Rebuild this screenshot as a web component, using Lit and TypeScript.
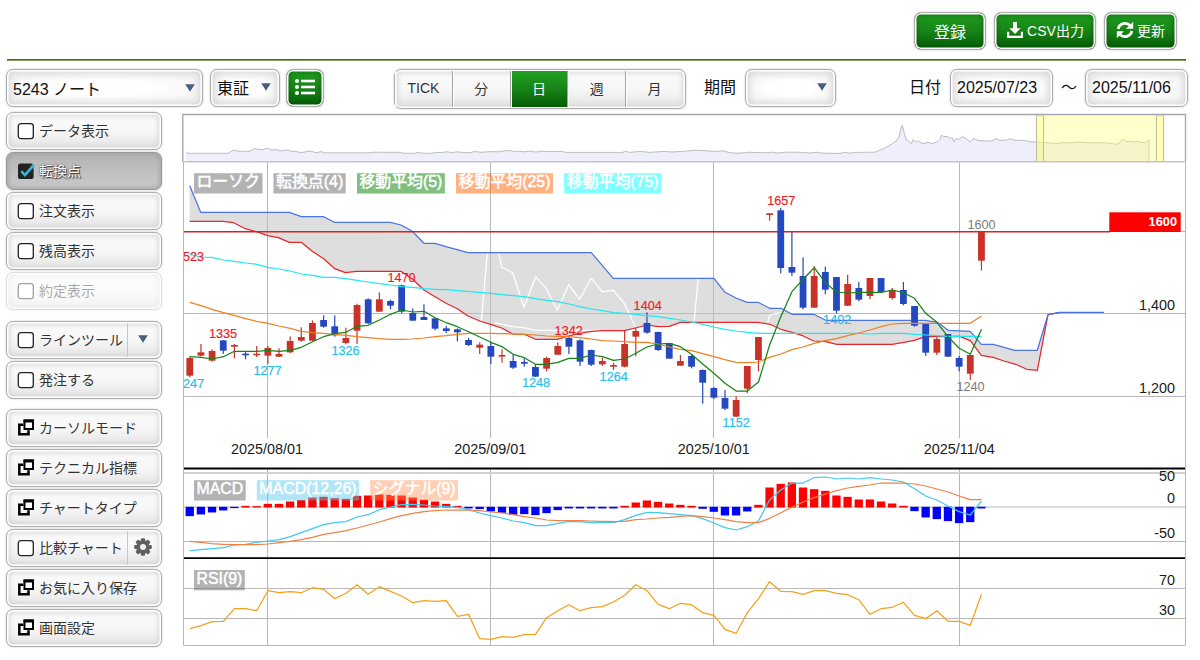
import { LitElement, html, svg, css, nothing } from "lit";
import { customElement, property } from "lit/decorators.js";

const JP = css`"Liberation Sans", "Noto Sans CJK JP", sans-serif`;

/* ---------- chart data ---------- */
const X0 = 189.8;
const STEP = 11.15;
const px = (i: number) => X0 + STEP * i;

// [up(1)/down(0), high, bodyTop, bodyBottom, low] in thirds of a pixel below y=160
const CANDLES: number[][] = [
  [1, 590, 594, 647, 652], [1, 552, 577, 587, 589], [1, 568, 573, 602, 605], [0, 541, 541, 572, 582],
  [1, 552, 555, 560, 595], [0, 574, 581, 586, 598], [1, 558, 581, 586, 591], [1, 558, 564, 587, 612],
  [1, 565, 582, 590, 591], [1, 529, 543, 577, 579], [1, 502, 531, 542, 545], [1, 481, 489, 542, 543],
  [0, 466, 480, 500, 503], [0, 466, 499, 526, 530], [1, 503, 534, 549, 553], [1, 431, 435, 512, 552],
  [0, 415, 418, 490, 492], [1, 397, 418, 455, 455], [0, 419, 423, 437, 448], [0, 374, 376, 455, 460],
  [0, 445, 459, 482, 482], [0, 433, 471, 480, 480], [0, 473, 475, 506, 511], [0, 498, 505, 513, 519],
  [0, 505, 508, 517, 544], [0, 534, 540, 555, 558], [1, 547, 554, 563, 582], [0, 545, 558, 590, 612],
  [1, 568, 585, 589, 608], [0, 582, 603, 623, 627], [0, 595, 606, 611, 620], [0, 613, 621, 650, 651],
  [1, 590, 594, 626, 634], [1, 547, 558, 584, 585], [0, 531, 534, 560, 582], [0, 538, 541, 605, 618],
  [0, 569, 570, 614, 618], [1, 594, 603, 613, 618], [1, 608, 615, 620, 630], [1, 510, 552, 620, 622],
  [1, 503, 513, 530, 589], [0, 457, 489, 518, 521], [0, 515, 516, 570, 573], [0, 549, 549, 596, 597],
  [1, 585, 603, 617, 617], [0, 585, 588, 620, 625], [0, 628, 630, 668, 731], [0, 681, 684, 713, 717],
  [0, 690, 714, 746, 750], [1, 709, 720, 770, 770], [1, 618, 618, 686, 699], [1, 531, 531, 600, 634],
  [1, 160, 160, 165, 182], [0, 144, 151, 324, 340], [0, 215, 321, 338, 348], [0, 292, 348, 443, 448],
  [1, 318, 348, 443, 444], [0, 320, 336, 389, 403], [0, 351, 351, 452, 460], [1, 344, 372, 437, 438],
  [0, 366, 384, 419, 424], [1, 354, 354, 408, 418], [0, 354, 354, 396, 399], [1, 384, 390, 414, 419],
  [0, 366, 390, 432, 436], [0, 438, 438, 497, 500], [0, 490, 492, 578, 588], [1, 525, 537, 578, 585],
  [0, 522, 522, 590, 591], [0, 588, 594, 620, 634], [1, 585, 585, 641, 660], [1, 215, 216, 302, 332],
];

const MA5 = [590, 592, 597, 590, 574, 574, 574, 571, 574, 571, 562, 545, 530, 521, 517, 499, 496, 480, 463, 450, 456, 454, 473, 488,
  500, 515, 531, 547, 560, 583, 593, 613, 613, 607, 595, 595, 585, 590, 601, 597, 580, 561, 552, 550, 560, 583, 612, 640,
  670, 693, 693, 666, 555, 470, 395, 358, 323, 368, 396, 399, 397, 397, 397, 390, 398, 415, 460, 487, 530, 565, 583, 508];
const MA25 = [427, 437, 448, 458, 466, 476, 484, 490, 498, 505, 514, 518, 520, 523, 526, 530, 533, 536, 538, 538, 537, 534, 530, 527,
  523, 520, 520, 520, 521, 522, 523, 525, 528, 529, 530, 533, 537, 542, 543, 545, 547, 547, 552, 561, 568, 572, 581, 590,
  599, 607, 608, 606, 592, 582, 569, 561, 550, 542, 536, 527, 519, 510, 500, 492, 490, 490, 490, 490, 490, 490, 490, 468];
const MA75 = [283, 291, 292, 300, 304, 309, 313, 322, 327, 333, 342, 346, 352, 352, 356, 361, 366, 371, 375, 380, 382, 386, 388, 389,
  392, 395, 397, 400, 404, 407, 410, 416, 421, 425, 432, 440, 447, 452, 458, 460, 463, 467, 470, 475, 480, 486, 493, 501,
  508, 513, 517, 520, 520, 520, 520, 520, 520, 520, 520, 520, 520, 522, 520, 520, 520, 523, 525, 527, 529, 529, 529, 529];

const HIST = [-28, -23, -17, -11, -4, 5, 4, 11, 11, 18, 22, 30, 32, 28, 26, 35, 36, 39, 38, 36, 30, 23, 18, 11, 5, -5, -7, -14, -18, -24,
  -22, -25, -19, -10, -5, -5, -5, -5, -5, 5, 15, 21, 17, 12, 8, 5, -6, -15, -26, -26, -14, 8, 60, 71, 75, 60, 55, 50, 36, 32,
  24, 24, 18, 12, 5, -13, -32, -37, -43, -49, -46, -5];
const MACD = [362, 359, 356, 353, 345, 343, 337, 333, 329, 320, 308, 296, 284, 278, 275, 261, 254, 239, 231, 224, 223, 225, 228, 230,
  232, 239, 249, 257, 264, 273, 278, 287, 287, 280, 274, 275, 278, 278, 278, 269, 256, 247, 248, 251, 254, 257, 266, 279,
  293, 300, 290, 272, 210, 180, 159, 159, 143, 141, 147, 144, 147, 143, 147, 150, 156, 176, 198, 210, 228, 245, 255, 213];
const SIGNAL = [334, 337, 341, 343, 344, 344, 344, 342, 338, 334, 329, 322, 313, 308, 302, 294, 285, 276, 266, 257, 250, 245, 242, 240,
  240, 240, 242, 246, 249, 254, 260, 264, 270, 272, 272, 272, 273, 274, 275, 274, 269, 267, 264, 262, 259, 257, 260, 264,
  269, 275, 278, 278, 265, 248, 232, 216, 203, 192, 182, 174, 169, 165, 159, 159, 159, 162, 168, 177, 186, 198, 209, 209];
const RSI = [596, 587, 575, 574, 536, 536, 542, 482, 488, 485, 488, 473, 478, 506, 490, 464, 493, 470, 484, 498, 518, 512, 514, 512,
  559, 553, 626, 628, 620, 622, 614, 613, 563, 542, 524, 542, 533, 530, 516, 496, 464, 482, 523, 536, 520, 524, 548, 556,
  598, 610, 548, 506, 455, 484, 485, 493, 482, 482, 490, 494, 509, 553, 536, 532, 517, 556, 566, 542, 574, 574, 586, 493];

// [x, y in thirds below 160]
const CLOUD_TOP: number[][] = [[189.7, 77], [200.7, 157], [289.3, 157], [301.3, 170], [323.7, 170], [334.3, 187], [390, 187], [401, 195],
  [412.3, 214], [424, 250], [435, 250], [446, 260], [468, 278], [591.3, 278], [613.3, 355], [714, 355], [725, 397], [736, 414],
  [747, 427], [758, 427], [769.7, 445], [781, 445], [792, 463], [813.7, 463], [825.7, 481], [925.3, 481], [937.3, 487],
  [948.3, 511], [970.3, 514], [981.3, 553], [993.3, 553], [1014.7, 571], [1037.3, 571], [1048, 464], [1060, 457], [1104, 457]];
const CLOUD_BOTTOM: number[][] = [[189.7, 184], [222.7, 184], [233.7, 188], [245.3, 206], [256.3, 215], [267.7, 227], [278.3, 233],
  [289.3, 247], [301.3, 247], [312.3, 274], [323.7, 296], [334.3, 325], [345.3, 338], [356.3, 334], [401, 334], [412.3, 357],
  [424, 390], [435, 410], [446, 430], [457.3, 446], [468, 468], [479.7, 483], [490.7, 493], [501.7, 504], [512.7, 522],
  [524, 523], [535.7, 538], [557.3, 538], [568.7, 528], [579.7, 520], [591.3, 514], [602.3, 512], [624.3, 512], [635.3, 504],
  [647.3, 495], [658.3, 500], [669.3, 499], [680.3, 487], [758, 487], [769.7, 493], [781, 508], [792, 517], [802.7, 527],
  [813.7, 543], [825.7, 545], [836.7, 553], [892.3, 553], [903.7, 547], [914.3, 541], [925.3, 530], [959.7, 529],
  [970.3, 542], [981.3, 586], [993.3, 592], [1004, 603], [1015.7, 613], [1026.7, 628], [1037.3, 631], [1048, 464], [1060, 457]];
const LAGGING: number[][][] = [
  [[481.3, 483], [487.3, 278]],
  [[498.7, 278], [501.7, 322], [512.7, 338], [524, 442], [535.7, 350], [546.3, 386], [557.3, 451], [568.7, 374], [579.7, 418],
    [591.3, 355], [602.3, 395], [613.3, 391], [624.3, 430], [635.3, 500]],
  [[495, 488], [512.7, 500], [524, 503], [535.7, 511], [600, 511]],
  [[694, 487], [698.3, 355]],
  [[767.7, 487], [769.7, 465], [781, 457]],
];

const OVERVIEW = "186,152.7 188,153.3 228,153.3 231,151.5 234,150 238,151.3 244,151.3 249,151.3 252,150 255,148.2 258,149.5 263,149.6 267,148.2 272,150 277,149.6 280,151 283,150.3 288,150 291,151.3 296,151.3 299,152.3 304,152.3 307,151.3 312,151.3 315,152.7 322,151.7 324,152.8 370,152.8 374,152.2 380,152.3 400,152.3 404,153.3 414,153.3 418,152.5 424,153.3 432,153.3 436,152.4 442,152.6 446,151.8 452,152.5 458,151.8 463,152.6 470,152.6 474,151.6 482,152.3 490,151.6 499,151.8 505,150.8 510,150.4 514,151.8 519,151.2 524,151.8 530,151.2 536,152 542,151.2 550,151.7 562,151.4 566,152.4 622,152.4 626,151.4 630,152.4 640,151.4 650,152.4 664,151.4 672,152 682,151.4 696,150.2 706,150.8 712,151.3 724,151 730,152.8 740,153.2 748,152.2 764,152.8 772,152.2 778,153 786,152.2 800,152.3 811,153 817,152.2 822,153.2 840,153.4 845,152.2 850,153.3 855,152.4 875,152.2 879,150.4 884,148.5 888,146.2 892,144 894,142 896,141.2 899,137 900.5,130 902.3,125 904,132 906,139 909,141.5 911.5,143.5 913,139.6 916,142 918,140.8 921,143 924,143.5 928,142.3 932,143.6 938,141.5 940,139.5 941.5,135 943.5,136.6 948,136.4 950,138.6 952,137.4 954,142 956,138.5 959,139.5 962,136.8 966,138.4 970,142 974,138.4 978,140.6 992,141 996,138.4 1000,140.4 1006,140.2 1010,138.8 1016,140.4 1024,140.4 1030,141.8 1036,141.8 1043,142.5 1056,143.4 1064,142.6 1070,143 1078,142 1090,142.8 1100,142.6 1110,143.2 1116,144.4 1120,142.4 1123,139 1126,141.5 1130,141.2 1134,141.8 1138,141.6 1142,142.6 1146,142.4 1149,139.5";

const pts = (a: number[][]) => a.map(([x, y]) => `${x},${(160 + y / 3).toFixed(1)}`).join(" ");
const series = (a: number[], base: number) => a.map((y, i) => `${px(i).toFixed(1)},${(base + y / 3).toFixed(1)}`).join(" ");

/* ---------- icons ---------- */
const popupIcon = html`<svg width="18" height="18" viewBox="0 0.500 18 18"><path d="M7.500 2h8.500v8.500H7.500z" fill="#fff" stroke="#000" stroke-width="2"/><path d="M6.500 1H17v3H6.500z"/><path d="M6.500 6.300H2.300v9.400h9.200v-4" fill="none" stroke="#000" stroke-width="2.500"/></svg>`;
const boxIcon = html`<svg width="18" height="18" viewBox="0 0 18 18"><rect x="1.300" y="1.600" width="15" height="15" rx="2.600" fill="#fff" stroke="#222" stroke-width="1.300"/></svg>`;
const checkedIcon = html`<svg width="18" height="18" viewBox="0 0 18 18"><rect x="1" y="1.400" width="15.600" height="15.600" rx="2.600" fill="#222"/><path d="M4.300 9.200l3.600 3.900L16.800 3" fill="none" stroke="#30b8d4" stroke-width="2.700"/></svg>`;
const gearIcon = html`<svg width="18" height="18" viewBox="-9 -9 18 18"><g fill="#606060">${[0, 45, 90, 135].map(
  (a) => svg`<rect x="-2.100" y="-8.800" width="4.200" height="17.600" rx="1" transform="rotate(${a})"/>`,
)}<circle r="6.800"/></g><circle r="3" fill="#f0f0f0"/></svg>`;
const downloadIcon = html`<svg width="18" height="18" viewBox="0 0 18 18"><path d="M7 1h4v6.300h3.600L9 13 3.400 7.300H7z" fill="#fff"/><path d="M2.100 10.800v5.100h13.800v-5.100" fill="none" stroke="#fff" stroke-width="2.100"/></svg>`;
const refreshIcon = html`<svg width="18" height="18" viewBox="0 0 18 18" fill="none" stroke="#fff" stroke-width="2.800"><path d="M2.200 8A7 6.800 0 0 1 14.200 4.600"/><path d="M15.800 10A7 6.800 0 0 1 3.800 13.400"/><path d="M17.200 .8v7H10z" fill="#fff" stroke="none"/><path d="M.8 17.200v-7H8z" fill="#fff" stroke="none"/></svg>`;
const listIcon = html`<svg width="22" height="18" viewBox="0 0 22 18" fill="#fff"><circle cx="3" cy="3" r="2"/><circle cx="3" cy="9" r="2"/><circle cx="3" cy="15" r="2"/><rect x="7" y="1.700" width="14" height="2.600"/><rect x="7" y="7.700" width="14" height="2.600"/><rect x="7" y="13.700" width="14" height="2.600"/></svg>`;
const arrowIcon = html`<svg width="10" height="8" viewBox="0 0 10 8"><path d="M.2 .3h9.600L5 7.800z" fill="#4a5c80"/></svg>`;

/* ---------- chart ---------- */
@customElement("stock-chart")
export class StockChart extends LitElement {
  static styles = css`
    :host { display: block; }
    svg { display: block; }
    text { font-family: ${JP}; }
    .grid { stroke: #b8b8b8; stroke-width: 1; fill: none; }
    .light { stroke: #d2d2d2; stroke-width: 2; }
    .frame { stroke: #a9a9ae; stroke-width: 1.4; fill: none; }
    .split { stroke: #000; stroke-width: 1.8; }
    .line { fill: none; stroke-width: 1.25; stroke-linejoin: round; }
    .legend { fill: #fff; font-size: 16px; stroke: #fff; stroke-width: .5; }
    .peak { fill: #ef1c28; }
    .trough { fill: #1fbfee; }
    .edge { fill: #7c7c7c; }
    .peak, .trough, .edge { font-size: 12.7px; text-anchor: middle; stroke-width: .2; }
    .peak { stroke: #ef1c28; }
    .trough { stroke: #1fbfee; }
    .axis { fill: #1a1a1a; font-size: 14.4px; text-anchor: end; }
    .date { fill: #1a1a1a; font-size: 14.4px; text-anchor: middle; }
    .price { fill: #fff; font-size: 12.8px; font-weight: bold; text-anchor: end; }
  `;

  private legend(x: number, y: number, w: number, fill: string, label: string) {
    return svg`<rect x=${x} y=${y} width=${w} height="20.300" fill=${fill}/>
      <text class="legend" x=${x + 2.5} y=${y + 14} textLength=${w - 5} lengthAdjust="spacingAndGlyphs">${label}</text>`;
  }

  render() {
    const verticals = [267.5, 490.5, 713.5, 959.5];
    return html`<svg width="1005" height="535" viewBox="182 113 1005 535">
      <polygon points="186,161.500 ${OVERVIEW} 1149,161.500" fill="#efeffb"/>
      <polyline points="${OVERVIEW} 1149,161" fill="none" stroke="#bdbdc2" stroke-width="1"/>
      <rect x="1036.500" y="115" width="127" height="46.500" fill="rgba(255,255,120,.38)"/>
      <rect x="1036.500" y="115" width="7" height="46.500" fill="rgba(255,255,120,.25)" stroke="#bdbda4" stroke-width="1"/>
      <rect x="1156.500" y="115" width="7" height="46.500" fill="rgba(255,255,120,.25)" stroke="#bdbda4" stroke-width="1"/>

      ${verticals.map((x) => svg`<path class="grid" d="M${x} 162V438M${x} 469V645"/>`)}
      <path class="grid" d="M183 231.500H1185M183 313.500H1185M183 396.500H1185M183 507H1185M183 541.500H1185M183 588.500H1185M183 618.500H1185"/>
      <path class="light" d="M183 473H1185"/>
      <polygon points="${pts(CLOUD_TOP)} ${pts([...CLOUD_BOTTOM].reverse())}" fill="rgba(190,190,190,.5)"/>
      ${LAGGING.map((l) => svg`<polyline class="line" points=${pts(l)} stroke="#fff"/>`)}
      <polyline class="line" points=${pts(CLOUD_BOTTOM)} stroke="#e8262b"/>
      <polyline class="line" points=${pts(CLOUD_TOP)} stroke="#4a74e0"/>
      <path d="M183 231.700H1110" stroke="#dc2020" stroke-width="1.400"/>
      ${CANDLES.map(([up, h, t, b, l], i) => {
        const x = px(i);
        const color = up ? "#c83228" : "#2448c0";
        return svg`<rect x=${x - 0.6} y=${160 + h / 3} width="1.200" height=${(l - h) / 3} fill=${color}/>
          <rect x=${x - 3.4} y=${160 + t / 3} width="6.800" height=${Math.max(1.6, (b - t) / 3)} fill=${color}/>`;
      })}
      <polyline class="line" points=${series(MA75, 160)} stroke="#22e6f0"/>
      <polyline class="line" points=${series(MA25, 160)} stroke="#f08024"/>
      <polyline class="line" points=${series(MA5, 160)} stroke="#168416"/>

      <text class="peak" x="193.500" y="261">523</text>
      <text class="peak" x="223" y="338">1335</text>
      <text class="peak" x="401.500" y="282">1470</text>
      <text class="peak" x="568.700" y="335">1342</text>
      <text class="peak" x="647.700" y="310">1404</text>
      <text class="peak" x="781.300" y="205">1657</text>
      <text class="trough" x="193.500" y="387.500">247</text>
      <text class="trough" x="267.500" y="374.700">1277</text>
      <text class="trough" x="345.500" y="355">1326</text>
      <text class="trough" x="536" y="386.500">1248</text>
      <text class="trough" x="613.700" y="381">1264</text>
      <text class="trough" x="736.200" y="426.700">1152</text>
      <text class="trough" x="837.200" y="324">1402</text>
      <text class="edge" x="981.500" y="229">1600</text>
      <text class="edge" x="970.500" y="391">1240</text>

      <rect x="1109.300" y="212.300" width="71.400" height="19.700" fill="#f00"/>
      <text class="price" x="1177" y="226">1600</text>
      <text class="axis" x="1175" y="310">1,400</text>
      <text class="axis" x="1175" y="392.500">1,200</text>
      ${[["2025/08/01", 267], ["2025/09/01", 490.3], ["2025/10/01", 713.7], ["2025/11/04", 959.3]].map(
        ([d, x]) => svg`<text class="date" x=${x} y="454.400">${d}</text>`,
      )}

      ${HIST.map((v, i) =>
        v > 0
          ? svg`<rect x=${px(i) - 4.2} y=${507.5 - v / 3} width="8.300" height=${v / 3} fill="#f00"/>`
          : svg`<rect x=${px(i) - 4.2} y="506.800" width="8.300" height=${-v / 3} fill="#00f"/>`,
      )}
      <polyline class="line" points=${series(MACD, 430)} stroke="#42c8ee"/>
      <polyline class="line" points=${series(SIGNAL, 430)} stroke="#f08248"/>
      <polyline class="line" points=${series(RSI, 430)} stroke="#f5a01a"/>
      <path class="split" d="M183 468.500H1185.500M183 558.200H1185.500"/>
      <text class="axis" x="1175" y="481">50</text>
      <text class="axis" x="1175" y="503">0</text>
      <text class="axis" x="1175" y="538">-50</text>
      <text class="axis" x="1175" y="585">70</text>
      <text class="axis" x="1175" y="615">30</text>

      ${this.legend(194, 173.2, 68.5, "rgba(110,110,110,.52)", "ローソク")}
      ${this.legend(273.5, 173.2, 72.2, "rgba(110,110,110,.52)", "転換点(4)")}
      ${this.legend(357, 173.2, 87.8, "rgba(0,128,0,.5)", "移動平均(5)")}
      ${this.legend(456, 173.2, 97, "rgba(255,100,0,.5)", "移動平均(25)")}
      ${this.legend(564.2, 173.2, 97, "rgba(0,255,255,.5)", "移動平均(75)")}
      ${this.legend(194, 480.2, 51.7, "rgba(110,110,110,.52)", "MACD")}
      ${this.legend(256.8, 480.2, 102.3, "rgba(80,200,240,.45)", "MACD(12,26)")}
      ${this.legend(370.3, 480.2, 87.7, "rgba(255,140,80,.42)", "シグナル(9)")}
      ${this.legend(194, 570, 50.8, "rgba(110,110,110,.52)", "RSI(9)")}

      <path class="frame" d="M182.800 161.800V114.500H1185.500V161.800"/>
      <path d="M182.500 161.800H1186" stroke="#c4c4cc" stroke-width="1.500"/>
      <path class="grid" d="M183.500 162V645.500H1185.500V162"/>
    </svg>`;
  }
}

/* ---------- button ---------- */
@customElement("ui-box")
export class UiBox extends LitElement {
  @property() variant = "plain";
  static styles = css`
    :host { display: block; height: 38px; box-sizing: border-box; }
    .box {
      box-sizing: border-box; height: 100%; width: 100%; display: flex; align-items: center;
      border: 1px solid #adadad; border-radius: 7px; font-family: ${JP}; color: #333;
      box-shadow: inset 0 0 0 1.5px #fff, inset 0 0 6px 2px #d2d2d2, 0 0 2px rgba(0, 0, 0, .25);
      background: linear-gradient(#fbfbfb, #f7f7f7 50%, #e4e4e4);
    }
    .active {
      background: linear-gradient(#b4b4b4, #cacaca); color: #fff; border-color: #999;
      box-shadow: inset 0 0 5px 1px #a2a2a2, 0 0 2px rgba(0, 0, 0, .25);
      text-shadow: 1px 1px 1px #333, 0 0 1px #555, 0 0 2px #666;
    }
    .green {
      color: #fff; background: linear-gradient(#1e9c1e, #188418 50%, #055c05);
      box-shadow: inset 0 0 0 1.5px #fff, inset 0 0 4px 2px rgba(0, 60, 0, .45), 0 0 2px rgba(0, 0, 0, .25);
    }
    .field { color: #111; background: radial-gradient(ellipse at center, #fff 30%, #f1f1f1 100%);
      box-shadow: inset 0 0 0 1.5px #fff, inset 0 0 8px 3px #d4d4d4, 0 0 2px rgba(0, 0, 0, .25); }
    .disabled { opacity: .42; }
  `;
  render() {
    return html`<div class="box ${this.variant}"><slot></slot></div>`;
  }
}

interface Item { label: string; icon: unknown; variant?: string; extra?: unknown; }

@customElement("app-root")
export class AppRoot extends LitElement {
  static styles = css`
    :host { display: block; width: 1200px; height: 660px; overflow: hidden; background: #fff; font-family: ${JP}; color: #111; font-size: 16px; }
    .header { display: flex; justify-content: flex-end; gap: 8px; height: 47px; margin: 0 14px 0 7px; padding: 12px 9px 0 0; }
    .rule { height: 2px; margin: 0 14px 0 7px; background: linear-gradient(#4b692c 50%, #83a05f 50%); }
    .save { width: 72px; } .csv { width: 102px; } .reload { width: 73px; }
    .center { display: flex; align-items: center; justify-content: center; width: 100%; gap: 3px; font-size: 14px; white-space: nowrap; padding-bottom: 2px; }
    .large { font-size: 16px; padding: 0; }
    .toolbar { display: flex; align-items: flex-start; height: 51px; padding: 8px 12px 0 6px; box-sizing: border-box; }
    .symbol { width: 197px; } .market { width: 70px; margin-left: 7px; } .list { width: 38px; margin-left: 6px; }
    .select { display: flex; flex: 1; align-items: center; justify-content: space-between; padding: 0 7px 1px 6px; white-space: nowrap; }
    .tight { padding-bottom: 3px; padding-right: 8px; }
    .segments { width: 292px; height: 40px; margin-left: 70px; }
    .cells { display: flex; flex: 1; height: 36px; margin: 0 2px 0 0; }
    .cell { flex: 1; display: flex; align-items: center; justify-content: center; box-sizing: border-box; padding-bottom: 2px; font-size: 14px; border-right: 1px solid #a4a4a4; box-shadow: inset 1px 0 0 #fff; }
    .cell:last-child { border-right: 0; }
    .on { color: #fff; background: linear-gradient(#21a021, #188418 50%, #055c05); }
    .text { height: 37px; line-height: 37px; white-space: nowrap; }
    .term { margin-left: 18px; } .span { width: 91px; margin-left: 9px; }
    .day { margin-left: 73px; } .date { width: 103px; margin-left: 9px; } .tilde { margin-left: 8px; } .to { margin-left: 8px; }
    .body { display: flex; gap: 20px; padding-left: 6px; }
    .side { width: 156px; display: flex; flex-direction: column; gap: 11px; }
    .group { display: flex; flex-direction: column; gap: 2px; }
    .group + .group + .group { margin-top: -1px; }
    .row { display: flex; flex: 1; align-items: center; height: 100%; padding-left: 10px; font-size: 14px; white-space: nowrap; }
    .row svg { flex: none; }
    .label { margin-left: 4px; flex: 1; padding-bottom: 2px; }
    .extra { width: 34px; height: 34px; flex: none; box-sizing: border-box; display: flex; align-items: center; justify-content: center; border-left: 1px solid #c6c6c6; padding: 0 3px 2px 0; }
    .chart { padding-top: 1px; }
  `;

  private groups: Item[][] = [
    [
      { label: "データ表示", icon: boxIcon },
      { label: "転換点", icon: checkedIcon, variant: "active" },
      { label: "注文表示", icon: boxIcon },
      { label: "残高表示", icon: boxIcon },
      { label: "約定表示", icon: boxIcon, variant: "disabled" },
    ],
    [
      { label: "ラインツール", icon: boxIcon, extra: arrowIcon },
      { label: "発注する", icon: boxIcon },
    ],
    [
      { label: "カーソルモード", icon: popupIcon },
      { label: "テクニカル指標", icon: popupIcon },
      { label: "チャートタイプ", icon: popupIcon },
      { label: "比較チャート", icon: boxIcon, extra: gearIcon },
      { label: "お気に入り保存", icon: popupIcon },
      { label: "画面設定", icon: popupIcon },
    ],
  ];

  render() {
    return html`
      <div class="header">
        <ui-box class="save" variant="green"><div class="center large">登録</div></ui-box>
        <ui-box class="csv" variant="green"><div class="center">${downloadIcon}<span>CSV出力</span></div></ui-box>
        <ui-box class="reload" variant="green"><div class="center">${refreshIcon}<span>更新</span></div></ui-box>
      </div>
      <div class="rule"></div>
      <div class="toolbar">
        <ui-box class="symbol" variant="field"><div class="select"><span>5243 ノート</span>${arrowIcon}</div></ui-box>
        <ui-box class="market" variant="field"><div class="select tight"><span>東証</span>${arrowIcon}</div></ui-box>
        <ui-box class="list" variant="green"><div class="center">${listIcon}</div></ui-box>
        <ui-box class="segments" variant="plain"><div class="cells">
          ${["TICK", "分", "日", "週", "月"].map((c) => html`<div class="cell ${c === "日" ? "on" : ""}">${c}</div>`)}
        </div></ui-box>
        <div class="text term">期間</div>
        <ui-box class="span" variant="field"><div class="select tight"><span></span>${arrowIcon}</div></ui-box>
        <div class="text day">日付</div>
        <ui-box class="date" variant="field"><div class="select"><span>2025/07/23</span></div></ui-box>
        <div class="text tilde">～</div>
        <ui-box class="date to" variant="field"><div class="select"><span>2025/11/06</span></div></ui-box>
      </div>
      <div class="body">
        <div class="side">
          ${this.groups.map((g) => html`<div class="group">${g.map((it) => html`
            <ui-box variant=${it.variant ?? "plain"}><div class="row">${it.icon}<span class="label">${it.label}</span>
              ${it.extra ? html`<span class="extra">${it.extra}</span>` : nothing}</div></ui-box>`)}</div>`)}
        </div>
        <stock-chart class="chart"></stock-chart>
      </div>`;
  }
}
